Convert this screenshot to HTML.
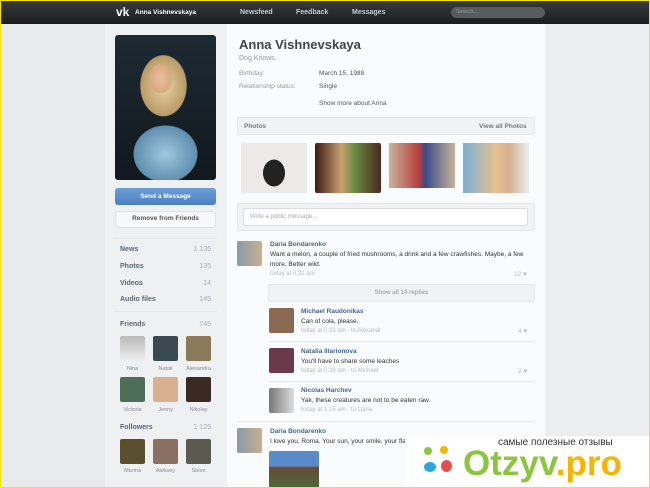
<!DOCTYPE html>
<html><head><meta charset="utf-8"><style>
*{margin:0;padding:0;box-sizing:border-box}
body{width:650px;height:488px;overflow:hidden;background:#e9eaec;font-family:"Liberation Sans",sans-serif;position:relative;color:#333}
.a{position:absolute}
.t{position:absolute;white-space:nowrap}
#top{left:0;top:0;width:650px;height:24px;background:linear-gradient(#3a3b3d,#1c1d1e)}
#side{left:105px;top:24px;width:122px;height:464px;background:#eff0f2}
#main{left:227px;top:24px;width:318px;height:464px;background:#fafbfc}
.nav{font-size:7px;color:#c9ccd0;font-weight:bold;top:9px}
.lbl{font-size:7px;color:#5a6677;font-weight:bold}
.cnt{font-size:7px;color:#aab;text-align:right;width:40px}
.fr{width:25px;height:25px;border-radius:2px}
.fn{font-size:5.5px;color:#889;width:33px;text-align:center}
.nm{font-size:6.5px;color:#45688e;font-weight:bold}
.tx{font-size:6.5px;color:#333}
.dt{font-size:6px;color:#bbb}
.lk{font-size:6.5px;color:#bbb}
.hr{height:1px;background:#e4e6e9}
</style></head><body>
<div class="a" id="top"></div>
<div class="t" style="left:116px;top:5px;font-size:12px;font-weight:bold;color:#fff">vk</div>
<div class="t" style="left:135px;top:9px;font-size:6.5px;font-weight:bold;color:#fff">Anna Vishnevskaya</div>
<div class="t nav" style="left:240px">Newsfeed</div>
<div class="t nav" style="left:296px">Feedback</div>
<div class="t nav" style="left:352px">Messages</div>
<div class="a" style="left:451px;top:7px;width:94px;height:11px;border-radius:6px;background:#5a5b5d"></div>
<div class="t" style="left:456px;top:9px;font-size:5.5px;color:#999">Search...</div>
<div class="a" id="side"></div>
<div class="a" id="main"></div>
<div class="a" style="left:545px;top:24px;width:105px;height:464px;background:#ecedef"></div>

<div class="a" style="left:115px;top:35px;width:101px;height:145px;border-radius:3px;background:radial-gradient(ellipse 14px 18px at 45% 30%,#e8c0a0,#d8a880 80%,transparent 82%),radial-gradient(ellipse 38px 50px at 48% 35%,#e8d4a0,#b89a68 60%,transparent 62%),radial-gradient(ellipse 45px 40px at 50% 82%,#a0c8e0,#5f8eae 70%,transparent 72%),linear-gradient(#1e2a33,#11181e)"></div>
<div class="a" style="left:115px;top:188px;width:101px;height:17px;border-radius:3px;background:linear-gradient(#6d9fd7,#4b7fc0)"></div>
<div class="t" style="left:115px;top:193px;width:101px;text-align:center;font-size:6.5px;font-weight:bold;color:#fff">Send a Message</div>
<div class="a" style="left:115px;top:211px;width:101px;height:17px;border-radius:3px;background:#f7f8f9;border:1px solid #dde0e4"></div>
<div class="t" style="left:115px;top:215px;width:101px;text-align:center;font-size:6.5px;font-weight:bold;color:#555">Remove from Friends</div>
<div class="a hr" style="left:113px;top:238px;width:104px"></div>
<div class="t lbl" style="left:120px;top:246px">News</div><div class="t cnt" style="left:171px;top:246px">1 135</div>
<div class="t lbl" style="left:120px;top:263px">Photos</div><div class="t cnt" style="left:171px;top:263px">135</div>
<div class="t lbl" style="left:120px;top:280px">Videos</div><div class="t cnt" style="left:171px;top:280px">14</div>
<div class="t lbl" style="left:120px;top:296px">Audio files</div><div class="t cnt" style="left:171px;top:296px">145</div>
<div class="a hr" style="left:113px;top:311px;width:104px"></div>
<div class="t lbl" style="left:120px;top:321px">Friends</div><div class="t cnt" style="left:171px;top:321px">745</div>
<div class="a fr" style="left:120px;top:336px;background:linear-gradient(#bbb,#eee)"></div>
<div class="a fr" style="left:153px;top:336px;background:#3a4850"></div>
<div class="a fr" style="left:186px;top:336px;background:#8a7a5a"></div>
<div class="t fn" style="left:116px;top:366px">Nina</div><div class="t fn" style="left:149px;top:366px">Natali</div><div class="t fn" style="left:182px;top:366px">Alexandra</div>
<div class="a fr" style="left:120px;top:377px;background:#4e6e5a"></div>
<div class="a fr" style="left:153px;top:377px;background:#d9b090"></div>
<div class="a fr" style="left:186px;top:377px;background:#3a2a22"></div>
<div class="t fn" style="left:116px;top:407px">Victoria</div><div class="t fn" style="left:149px;top:407px">Jenny</div><div class="t fn" style="left:182px;top:407px">Nikolay</div>
<div class="t lbl" style="left:120px;top:424px">Followers</div><div class="t cnt" style="left:171px;top:424px">1 125</div>
<div class="a fr" style="left:120px;top:439px;background:#5a5030"></div>
<div class="a fr" style="left:153px;top:439px;background:#8a7060"></div>
<div class="a fr" style="left:186px;top:439px;background:#5a5a50"></div>
<div class="t fn" style="left:116px;top:468px">Marina</div><div class="t fn" style="left:149px;top:468px">Aleksey</div><div class="t fn" style="left:182px;top:468px">Steve</div>

<div class="t" style="left:239px;top:37px;font-size:13px;font-weight:bold;color:#444">Anna Vishnevskaya</div>
<div class="t" style="left:239px;top:55px;font-size:7px;color:#999">Dog Knows.</div>
<div class="t" style="left:239px;top:70px;font-size:6.5px;color:#999">Birthday:</div>
<div class="t" style="left:319px;top:70px;font-size:6.5px;color:#555">March 15, 1988</div>
<div class="t" style="left:239px;top:83px;font-size:6.5px;color:#999">Relationship status:</div>
<div class="t" style="left:319px;top:83px;font-size:6.5px;color:#555">Single</div>
<div class="t" style="left:319px;top:100px;font-size:6.5px;color:#555">Show more about Anna</div>
<div class="a" style="left:237px;top:117px;width:298px;height:18px;background:#f1f2f4;border:1px solid #e4e6e9;border-radius:2px"></div>
<div class="t lbl" style="left:244px;top:123px;color:#777;font-size:6.5px">Photos</div>
<div class="t lbl" style="left:479px;top:123px;color:#777;font-size:6.5px">View all Photos</div>
<div class="a" style="left:241px;top:143px;width:66px;height:50px;background:radial-gradient(ellipse 18px 22px at 50% 60%,#222 60%,transparent 62%),#eceae8"></div>
<div class="a" style="left:315px;top:143px;width:66px;height:50px;border-radius:2px;background:linear-gradient(90deg,#3a1a14,#c9a070 40%,#6a8a40 60%,#4a2a20)"></div>
<div class="a" style="left:389px;top:143px;width:66px;height:45px;background:linear-gradient(90deg,#c9b39a,#b84040 45%,#3a4a8a 55%,#c9b39a)"></div>
<div class="a" style="left:463px;top:143px;width:66px;height:50px;background:linear-gradient(90deg,#7ab0d8,#e8c090 50%,#d8b090 70%,#e8eef2)"></div>
<div class="a" style="left:237px;top:203px;width:298px;height:28px;background:#f1f2f4;border:1px solid #e4e6e9;border-radius:2px"></div>
<div class="a" style="left:243px;top:208px;width:285px;height:18px;background:#fff;border:1px solid #d8dbdf;border-radius:2px"></div>
<div class="t" style="left:250px;top:214px;font-size:6px;color:#aaa">Write a public message...</div>

<div class="a fr" style="left:237px;top:241px;background:linear-gradient(90deg,#889aa8,#c8b090)"></div>
<div class="t nm" style="left:270px;top:241px">Daria Bondarenko</div>
<div class="t tx" style="left:270px;top:251px">Want a melon, a couple of fried mushrooms, a drink and a few crawfishes. Maybe, a few</div>
<div class="t tx" style="left:270px;top:261px">more. Better wild.</div>
<div class="t dt" style="left:270px;top:271px">today at 0:31 am</div>
<div class="t lk" style="left:514px;top:271px">12 ♥</div>
<div class="a" style="left:268px;top:284px;width:267px;height:18px;background:#f1f2f4;border:1px solid #e4e6e9;border-radius:2px"></div>
<div class="t" style="left:268px;top:290px;width:267px;text-align:center;font-size:6px;font-weight:bold;color:#aaa">Show all 14 replies</div>

<div class="a fr" style="left:269px;top:308px;background:#8a6a50"></div>
<div class="t nm" style="left:301px;top:308px">Michael Raudonikas</div>
<div class="t tx" style="left:301px;top:318px">Can of cola, please.</div>
<div class="t dt" style="left:301px;top:328px">today at 0:33 am - to Alexandr</div>
<div class="t lk" style="left:518px;top:328px">4 ♥</div>
<div class="a hr" style="left:269px;top:341px;width:266px"></div>
<div class="a fr" style="left:269px;top:348px;background:#6a3a4a"></div>
<div class="t nm" style="left:301px;top:348px">Natalia Illarionova</div>
<div class="t tx" style="left:301px;top:358px">You'll have to share some leaches</div>
<div class="t dt" style="left:301px;top:368px">today at 0:39 am - to Michael</div>
<div class="t lk" style="left:518px;top:368px">2 ♥</div>
<div class="a hr" style="left:269px;top:381px;width:266px"></div>
<div class="a fr" style="left:269px;top:388px;background:linear-gradient(90deg,#777,#ddd)"></div>
<div class="t nm" style="left:301px;top:387px">Nicolas Harchev</div>
<div class="t tx" style="left:301px;top:397px">Yak, these creatures are not to be eaten raw.</div>
<div class="t dt" style="left:301px;top:407px">today at 1:15 am - to Daria</div>
<div class="a hr" style="left:237px;top:421px;width:298px"></div>
<div class="a fr" style="left:237px;top:428px;background:linear-gradient(90deg,#889aa8,#c8b090)"></div>
<div class="t nm" style="left:270px;top:428px">Daria Bondarenko</div>
<div class="t tx" style="left:270px;top:438px">I love you, Roma. Your sun, your smile, your flavour...</div>
<div class="a" style="left:269px;top:451px;width:50px;height:37px;border-radius:2px;background:linear-gradient(#5a8acb 40%,#6a4a3a 45%,#4a6a3a)"></div>

<div class="a" style="left:405px;top:436px;width:245px;height:52px;background:#fff"></div>
<div class="t" style="left:498px;top:437px;font-size:10px;color:#333">самые полезные отзывы</div>
<div class="a" style="left:424px;top:447px;width:8px;height:8px;border-radius:50%;background:#8cc63f"></div>
<div class="a" style="left:440px;top:446px;width:8px;height:8px;border-radius:50%;background:#f7b500"></div>
<div class="a" style="left:424px;top:462px;width:12px;height:10px;border-radius:50%;background:#2aa6df"></div>
<div class="a" style="left:441px;top:460px;width:11px;height:12px;border-radius:50%;background:#e94e4e"></div>
<div class="t" style="left:463px;top:443px;font-size:35px;line-height:42px;font-weight:bold;color:#8cc63f">Otzyv<span style="color:#f7b500">.pro</span></div>
<div class="a" style="left:0;top:0;width:650px;height:488px;border:1px solid #f5e400"></div>
</body></html>
